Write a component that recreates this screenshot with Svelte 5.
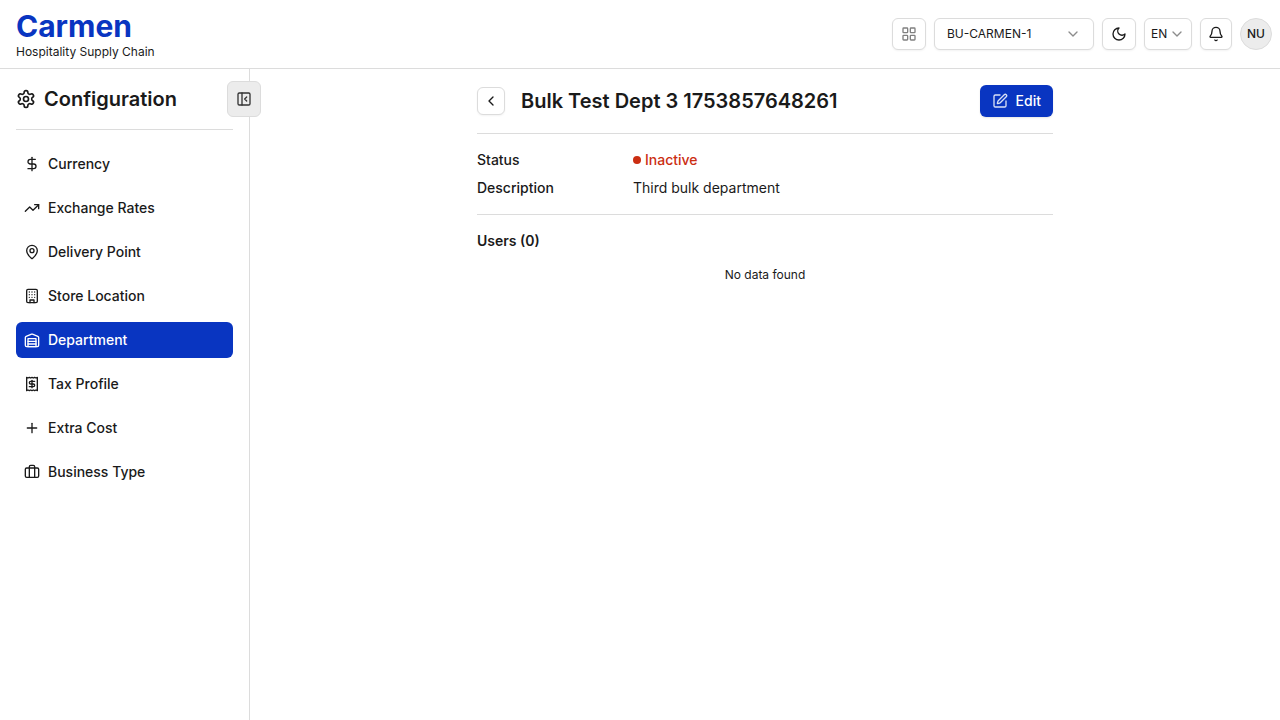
<script>
  const navItems = [
    { label: 'Currency', icon: 'dollar' },
    { label: 'Exchange Rates', icon: 'trending' },
    { label: 'Delivery Point', icon: 'pin' },
    { label: 'Store Location', icon: 'building' },
    { label: 'Department', icon: 'warehouse', active: true },
    { label: 'Tax Profile', icon: 'receipt' },
    { label: 'Extra Cost', icon: 'plus' },
    { label: 'Business Type', icon: 'briefcase' }
  ];

  const icons = {
    dollar: ['M12 2v20', 'M17 5H9.5a3.5 3.5 0 0 0 0 7h5a3.5 3.5 0 0 1 0 7H6'],
    trending: ['M22 7 13.5 15.5 8.5 10.5 2 17', 'M16 7h6v6'],
    pin: [
      'M20 10c0 4.993-5.539 10.193-7.399 11.799a1 1 0 0 1-1.202 0C9.539 20.193 4 14.993 4 10a8 8 0 0 1 16 0',
      'M9 10a3 3 0 1 0 6 0a3 3 0 1 0-6 0'
    ],
    building: [
      'M6 2h12a2 2 0 0 1 2 2v16a2 2 0 0 1-2 2H6a2 2 0 0 1-2-2V4a2 2 0 0 1 2-2z',
      'M9 22v-4h6v4', 'M8 6h.01', 'M16 6h.01', 'M12 6h.01', 'M12 10h.01', 'M12 14h.01',
      'M16 10h.01', 'M16 14h.01', 'M8 10h.01', 'M8 14h.01'
    ],
    warehouse: [
      'M22 8.35V20a2 2 0 0 1-2 2H4a2 2 0 0 1-2-2V8.35A2 2 0 0 1 3.26 6.5l8-3.2a2 2 0 0 1 1.48 0l8 3.2A2 2 0 0 1 22 8.35Z',
      'M6 18h12', 'M6 14h12', 'M6 10h12v12H6z'
    ],
    receipt: [
      'M4 2v20l2-1 2 1 2-1 2 1 2-1 2 1 2-1 2 1V2l-2 1-2-1-2 1-2-1-2 1-2-1-2 1Z',
      'M16 8h-6a2 2 0 1 0 0 4h4a2 2 0 1 1 0 4H8', 'M12 17.5v-11'
    ],
    plus: ['M5 12h14', 'M12 5v14'],
    briefcase: [
      'M16 20V4a2 2 0 0 0-2-2h-4a2 2 0 0 0-2 2v16',
      'M4 6h16a2 2 0 0 1 2 2v10a2 2 0 0 1-2 2H4a2 2 0 0 1-2-2V8a2 2 0 0 1 2-2z'
    ],
    gear: [
      'M12.22 2h-.44a2 2 0 0 0-2 2v.18a2 2 0 0 1-1 1.73l-.43.25a2 2 0 0 1-2 0l-.15-.08a2 2 0 0 0-2.73.73l-.22.38a2 2 0 0 0 .73 2.73l.15.1a2 2 0 0 1 1 1.72v.51a2 2 0 0 1-1 1.74l-.15.09a2 2 0 0 0-.73 2.73l.22.38a2 2 0 0 0 2.73.73l.15-.08a2 2 0 0 1 2 0l.43.25a2 2 0 0 1 1 1.73V20a2 2 0 0 0 2 2h.44a2 2 0 0 0 2-2v-.18a2 2 0 0 1 1-1.73l.43-.25a2 2 0 0 1 2 0l.15.08a2 2 0 0 0 2.73-.73l.22-.39a2 2 0 0 0-.73-2.73l-.15-.08a2 2 0 0 1-1-1.74v-.5a2 2 0 0 1 1-1.74l.15-.09a2 2 0 0 0 .73-2.73l-.22-.38a2 2 0 0 0-2.73-.73l-.15.08a2 2 0 0 1-2 0l-.43-.25a2 2 0 0 1-1-1.73V4a2 2 0 0 0-2-2z',
      'M9 12a3 3 0 1 0 6 0a3 3 0 1 0-6 0'
    ],
    panel: [
      'M5 3h14a2 2 0 0 1 2 2v14a2 2 0 0 1-2 2H5a2 2 0 0 1-2-2V5a2 2 0 0 1 2-2z',
      'M9 3v18', 'm16 15-3-3 3-3'
    ],
    grid: [
      'M4 3h5a1 1 0 0 1 1 1v5a1 1 0 0 1-1 1H4a1 1 0 0 1-1-1V4a1 1 0 0 1 1-1z',
      'M15 3h5a1 1 0 0 1 1 1v5a1 1 0 0 1-1 1h-5a1 1 0 0 1-1-1V4a1 1 0 0 1 1-1z',
      'M15 14h5a1 1 0 0 1 1 1v5a1 1 0 0 1-1 1h-5a1 1 0 0 1-1-1v-5a1 1 0 0 1 1-1z',
      'M4 14h5a1 1 0 0 1 1 1v5a1 1 0 0 1-1 1H4a1 1 0 0 1-1-1v-5a1 1 0 0 1 1-1z'
    ],
    down: ['m6 9 6 6 6-6'],
    left: ['m15 18-6-6 6-6'],
    moon: ['M12 3a6 6 0 0 0 9 9 9 9 0 1 1-9-9Z'],
    bell: [
      'M10.268 21a2 2 0 0 0 3.464 0',
      'M3.262 15.326A1 1 0 0 0 4 17h16a1 1 0 0 0 .74-1.673C19.41 13.956 18 12.499 18 8A6 6 0 0 0 6 8c0 4.499-1.411 5.956-2.738 7.326'
    ],
    edit: [
      'M12 3H5a2 2 0 0 0-2 2v14a2 2 0 0 0 2 2h14a2 2 0 0 0 2-2v-7',
      'M18.375 2.625a1 1 0 0 1 3 3l-9.013 9.014a2 2 0 0 1-.853.505l-2.873.84a.5.5 0 0 1-.62-.62l.84-2.873a2 2 0 0 1 .506-.852z'
    ]
  };
</script>

{#snippet icon(name, size = 16)}
  <svg width={size} height={size} viewBox="0 0 24 24" fill="none" stroke="currentColor" stroke-width="2" stroke-linecap="round" stroke-linejoin="round" aria-hidden="true">
    {#each icons[name] as d}<path {d} />{/each}
  </svg>
{/snippet}

<div class="page">
  <header class="topbar">
    <div class="brand">
      <span class="name">Carmen</span>
      <span class="tagline">Hospitality Supply Chain</span>
    </div>
    <div class="tools">
      <button class="box wide muted" aria-label="Modules">{@render icon('grid')}</button>
      <label class="picker unit">
        <select aria-label="Business unit"><option>BU-CARMEN-1</option></select>
        {@render icon('down')}
      </label>
      <button class="box wide" aria-label="Toggle theme">{@render icon('moon')}</button>
      <label class="picker lang">
        <select aria-label="Language"><option>EN</option></select>
        {@render icon('down')}
      </label>
      <button class="box" aria-label="Notifications">{@render icon('bell')}</button>
      <button class="avatar">NU</button>
    </div>
  </header>

  <div class="body">
    <aside>
      <div class="side-head">
        {@render icon('gear', 20)}
        <h2>Configuration</h2>
      </div>
      <button class="collapse" aria-label="Collapse sidebar">{@render icon('panel')}</button>
      <nav>
        {#each navItems as item}
          <a href="#{item.icon}" class:active={item.active}>{@render icon(item.icon)}{item.label}</a>
        {/each}
      </nav>
    </aside>

    <main>
      <div class="content">
        <div class="title-row">
          <button class="back" aria-label="Back">{@render icon('left')}</button>
          <h1>Bulk Test Dept 3 1753857648261</h1>
          <button class="edit">{@render icon('edit')}Edit</button>
        </div>
        <dl>
          <dt>Status</dt>
          <dd class="inactive"><span class="dot"></span>Inactive</dd>
          <dt>Description</dt>
          <dd>Third bulk department</dd>
        </dl>
        <section>
          <h3>Users (0)</h3>
          <p>No data found</p>
        </section>
      </div>
    </main>
  </div>
</div>

<style>
  :global(body) {
    margin: 0;
    background: #fff;
  }
  .page {
    display: flex;
    flex-direction: column;
    min-height: 100vh;
    font: 14px/20px Inter, sans-serif;
    color: #1a1a1a;
  }
  .page * { box-sizing: border-box; }
  button, select {
    font: inherit;
    color: inherit;
    margin: 0;
    padding: 0;
  }
  svg { flex: none; }
  h1, h2, h3, p, dl, dd { margin: 0; }

  .topbar {
    display: flex;
    align-items: center;
    justify-content: space-between;
    padding: 8px 8px 8px 16px;
    border-bottom: 1px solid #dcdcdc;
  }
  .brand {
    display: flex;
    flex-direction: column;
  }
  .name {
    font-size: 30px;
    line-height: 36px;
    font-weight: 700;
    color: #0935c1;
  }
  .tagline {
    font-size: 12px;
    line-height: 16px;
  }
  .tools {
    display: flex;
    align-items: center;
    gap: 8px;
    font-size: 12px;
  }
  .box, .picker, .back {
    background: #fff;
    border: 1px solid #dcdcdc;
    border-radius: 6px;
    box-shadow: 0 1px 2px rgb(0 0 0 / 5%);
  }
  .box, .avatar, .back, .collapse {
    display: flex;
    align-items: center;
    justify-content: center;
  }
  .box {
    width: 32px;
    height: 32px;
  }
  .wide { width: 34px; }
  .muted { color: #808080; }
  .picker {
    display: grid;
    align-items: center;
    height: 32px;
  }
  .picker select, .picker svg { grid-area: 1 / 1; }
  .picker select {
    appearance: none;
    width: 100%;
    height: 30px;
    border: 0;
    background: transparent;
  }
  .picker svg {
    justify-self: end;
    color: #8c8c8c;
    pointer-events: none;
  }
  .unit { width: 160px; }
  .unit select { padding-left: 12px; }
  .unit svg { margin-right: 12px; }
  .lang { width: 48px; }
  .lang select { padding-left: 6px; }
  .lang svg { margin-right: 6px; }
  .avatar {
    width: 32px;
    height: 32px;
    border: 1px solid #dcdcdc;
    border-radius: 50%;
    background: #ececec;
    font-weight: 500;
  }

  .body {
    display: flex;
    flex: 1;
  }
  aside {
    position: relative;
    flex: none;
    width: 250px;
    padding: 0 16px;
    border-right: 1px solid #dcdcdc;
  }
  .side-head {
    display: flex;
    align-items: center;
    gap: 8px;
    padding: 16px 0;
    border-bottom: 1px solid #dcdcdc;
  }
  h1, h2 {
    font-size: 20px;
    line-height: 28px;
    font-weight: 600;
  }
  .collapse {
    position: absolute;
    top: 12px;
    right: -12px;
    width: 34px;
    height: 36px;
    border: 1px solid #dcdcdc;
    border-radius: 6px;
    background: #ececec;
    color: #333;
  }
  nav {
    display: flex;
    flex-direction: column;
    gap: 8px;
    padding: 16px 0;
  }
  nav a {
    display: flex;
    align-items: center;
    gap: 8px;
    padding: 8px;
    border-radius: 6px;
    font-weight: 500;
    color: inherit;
    text-decoration: none;
  }
  nav a.active {
    background: #0935c1;
    color: #fff;
  }

  main {
    flex: 1;
    padding: 16px;
  }
  .content {
    max-width: 576px;
    margin: 0 auto;
  }
  .title-row {
    display: flex;
    align-items: center;
    gap: 16px;
    padding-bottom: 16px;
    border-bottom: 1px solid #dcdcdc;
  }
  .back {
    width: 28px;
    height: 28px;
  }
  .edit {
    display: flex;
    align-items: center;
    gap: 8px;
    height: 32px;
    margin-left: auto;
    padding: 0 12px;
    border: 0;
    border-radius: 6px;
    background: #0935c1;
    color: #fff;
    font-weight: 500;
    box-shadow: 0 1px 2px rgb(0 0 0 / 10%);
  }
  .edit svg { opacity: 0.85; }
  dl {
    display: grid;
    grid-template-columns: 140px 1fr;
    gap: 8px 16px;
    padding: 16px 0;
    border-bottom: 1px solid #dcdcdc;
  }
  dt { font-weight: 500; }
  .inactive {
    display: flex;
    align-items: center;
    gap: 4px;
    font-weight: 500;
    color: #cb2e12;
  }
  .dot {
    width: 8px;
    height: 8px;
    border-radius: 50%;
    background: currentColor;
  }
  section {
    display: flex;
    flex-direction: column;
    gap: 16px;
    padding-top: 16px;
  }
  h3 {
    font-size: 14px;
    font-weight: 600;
  }
  section p {
    font-size: 12px;
    line-height: 16px;
    text-align: center;
  }
</style>
